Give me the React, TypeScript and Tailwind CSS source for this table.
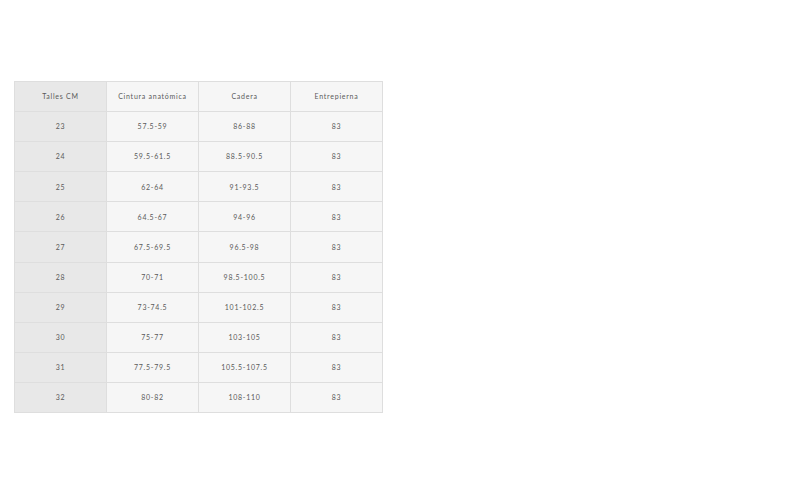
const headers = ["Talles CM", "Cintura anatómica", "Cadera", "Entrepierna"]

const rows = [
  ["23", "57.5-59", "86-88", "83"],
  ["24", "59.5-61.5", "88.5-90.5", "83"],
  ["25", "62-64", "91-93.5", "83"],
  ["26", "64.5-67", "94-96", "83"],
  ["27", "67.5-69.5", "96.5-98", "83"],
  ["28", "70-71", "98.5-100.5", "83"],
  ["29", "73-74.5", "101-102.5", "83"],
  ["30", "75-77", "103-105", "83"],
  ["31", "77.5-79.5", "105.5-107.5", "83"],
  ["32", "80-82", "108-110", "83"],
]

export default function App() {
  return (
    <div className="min-h-screen bg-white pt-[81px] pl-[14px] font-['Lato',sans-serif]">
      <table className="table-fixed border-collapse w-[368px] text-[7px] tracking-[0.75px] text-[#5a5a5a]">
        <thead>
          <tr>
            {headers.map((h, i) => (
              <th
                key={h}
                className={`h-[30.1px] w-[92px] border border-[#dedede] p-0 font-normal text-center ${
                  i === 0 ? "bg-[#e8e8e8]" : "bg-[#f6f6f6]"
                }`}
              >
                {h}
              </th>
            ))}
          </tr>
        </thead>
        <tbody>
          {rows.map((row) => (
            <tr key={row[0]}>
              {row.map((cell, i) => (
                <td
                  key={i}
                  className={`h-[30.1px] border border-[#dedede] p-0 text-center ${
                    i === 0 ? "bg-[#e8e8e8]" : "bg-[#f6f6f6]"
                  }`}
                >
                  {cell}
                </td>
              ))}
            </tr>
          ))}
        </tbody>
      </table>
    </div>
  )
}
